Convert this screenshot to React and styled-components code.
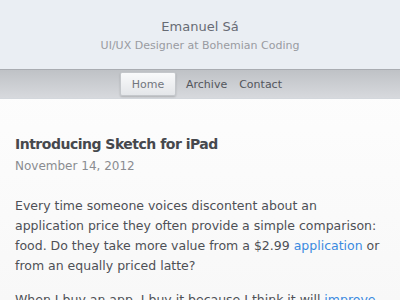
import React from "react";
import styled, { createGlobalStyle } from "styled-components";

const GlobalStyle = createGlobalStyle`
  html, body {
    margin: 0;
    padding: 0;
    background: #fdfdfd;
  }
  body {
    font-family: "DejaVu Sans", "Liberation Sans", sans-serif;
    -webkit-font-smoothing: antialiased;
  }
`;

const Page = styled.div`
  width: 400px;
  height: 300px;
  overflow: hidden;
  background: linear-gradient(#ffffff, #f8f8f8);
`;

const Header = styled.header`
  height: 69px;
  background: #eaeef3;
  display: flex;
  flex-direction: column;
  align-items: center;
  justify-content: center;
  gap: 5px;
  padding-top: 1px;
  box-sizing: border-box;
`;

const Name = styled.h1`
  margin: 0;
  font-size: 13px;
  font-weight: normal;
  color: #676b74;
`;

const Tagline = styled.p`
  margin: 0;
  font-size: 11px;
  color: #999ba1;
`;

const NavBar = styled.nav`
  height: 30px;
  box-sizing: border-box;
  border-top: 1px solid #a9acb1;
  border-bottom: 1px solid #d3d7dc;
  background: linear-gradient(#bfc2c6, #d7d9dd);
  display: flex;
  justify-content: center;
  align-items: center;
  padding-left: 8px;
`;

const NavItem = styled.a`
  font-size: 11px;
  color: ${(p) => (p.active ? "#72767e" : "#53565c")};
  text-decoration: none;
  box-sizing: border-box;
  height: 24px;
  display: flex;
  align-items: center;
  justify-content: center;
  padding: 0 6px;
  width: ${(p) => (p.active ? "56px" : "auto")};
  margin-right: ${(p) => (p.active ? "4px" : "0")};
  border-radius: 2px;
  ${(p) =>
    p.active &&
    `
    background: linear-gradient(#f9fafb, #e4e6e9);
    border: 1px solid #c4c7cb;
    box-shadow: 0 1px 2px rgba(0,0,0,0.18);
  `}
`;

const Main = styled.main`
  padding: 37px 15px 0 15px;
`;

const Title = styled.h2`
  margin: 0;
  font-size: 14px;
  letter-spacing: -0.5px;
  font-weight: bold;
  color: #46484d;
`;

const Date = styled.div`
  margin-top: 7px;
  font-size: 12px;
  color: #8a8c90;
`;

const Para = styled.p`
  margin: 23px 0 0 0;
  font-size: 12.5px;
  line-height: 20px;
  color: #4e5056;

  & + & {
    margin-top: 14px;
  }
`;

const Link = styled.a`
  color: #3b8ae0;
  text-decoration: none;
`;

export default function App() {
  return (
    <>
      <GlobalStyle />
      <Page>
        <Header>
          <Name>Emanuel Sá</Name>
          <Tagline>UI/UX Designer at Bohemian Coding</Tagline>
        </Header>
        <NavBar>
          <NavItem active>Home</NavItem>
          <NavItem>Archive</NavItem>
          <NavItem>Contact</NavItem>
        </NavBar>
        <Main>
          <Title>Introducing Sketch for iPad</Title>
          <Date>November 14, 2012</Date>
          <Para>
            Every time someone voices discontent about an application price
            they often provide a simple comparison: food. Do they take more
            value from a $2.99 <Link>application</Link> or from an equally
            priced latte?
          </Para>
          <Para>
            When I buy an app, I buy it because I think it will{" "}
            <Link>improve</Link> my life.
          </Para>
        </Main>
      </Page>
    </>
  );
}
